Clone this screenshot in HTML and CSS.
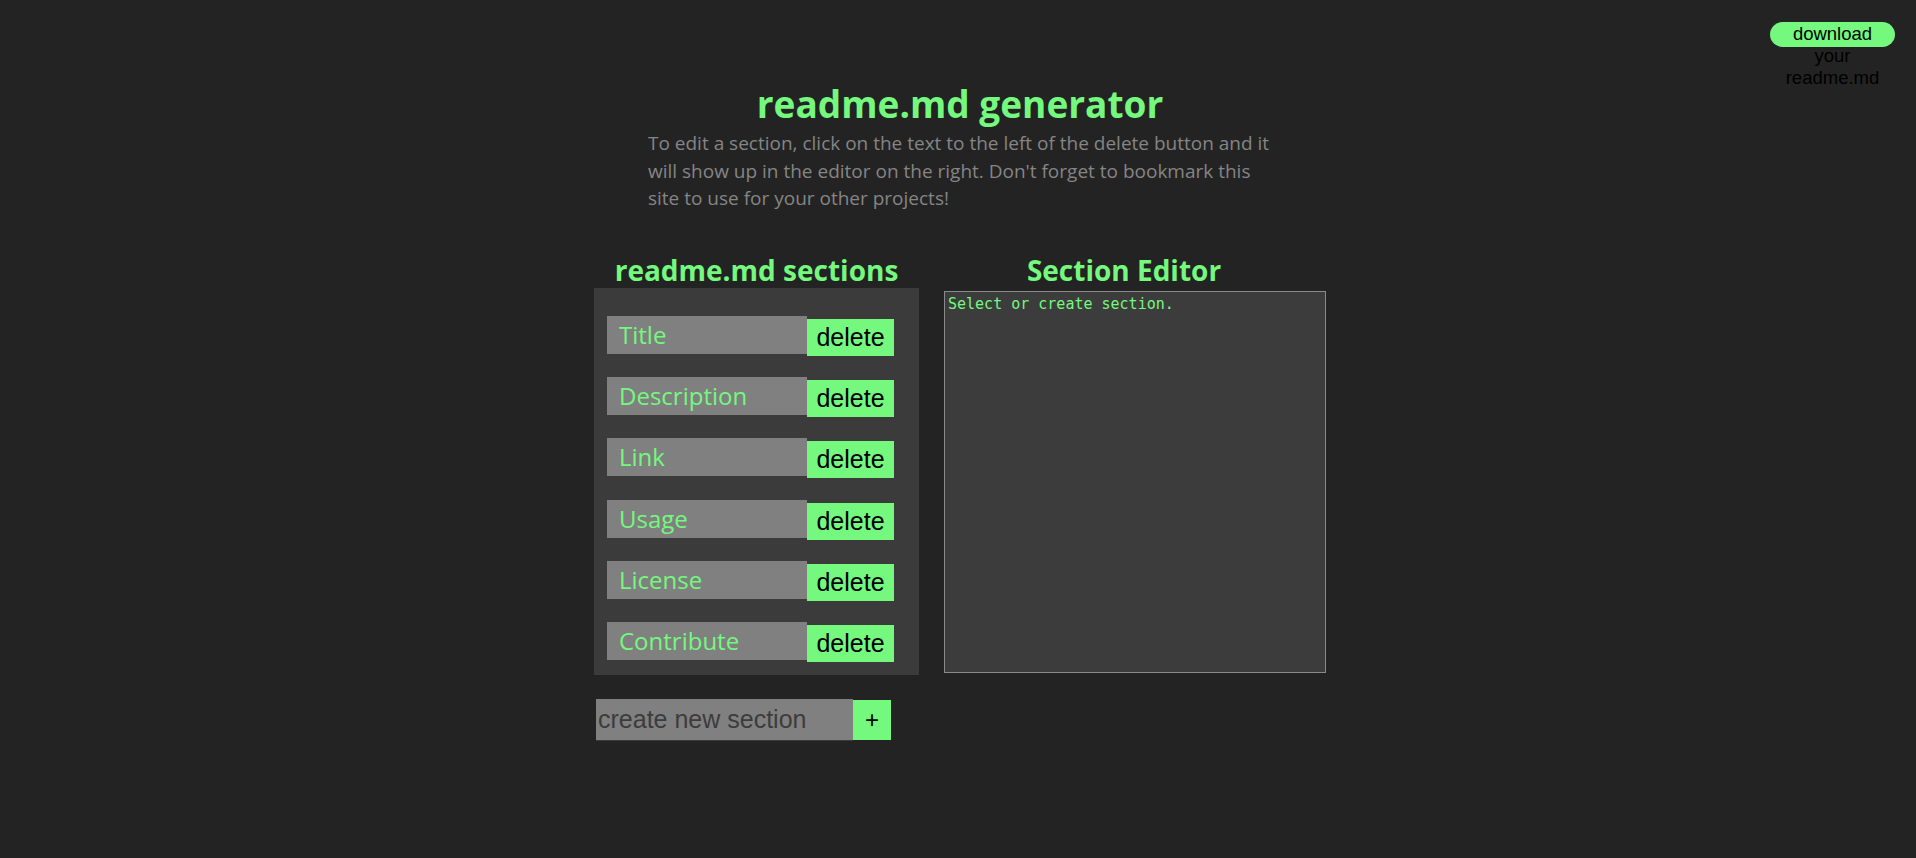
FILE: index.html
```html
<!DOCTYPE html>
<html lang="en">
<head>
<meta charset="utf-8">
<title>readme.md generator</title>
<link rel="stylesheet" href="styles.css">
</head>
<body>
<div class="download">download your readme.md</div>
<main class="app">
  <header class="intro">
    <h1 class="title">readme.md generator</h1>
    <p class="lead">To edit a section, click on the text to the left of the delete button and it will show up in the editor on the right. Don't forget to bookmark this site to use for your other projects!</p>
  </header>
  <div class="workspace">
    <section class="sections-col">
      <h2 class="col-title">readme.md sections</h2>
      <div class="panel">
        <div class="row"><div class="sec-name">Title</div><button class="del">delete</button></div>
        <div class="row"><div class="sec-name">Description</div><button class="del">delete</button></div>
        <div class="row"><div class="sec-name">Link</div><button class="del">delete</button></div>
        <div class="row"><div class="sec-name">Usage</div><button class="del">delete</button></div>
        <div class="row"><div class="sec-name">License</div><button class="del">delete</button></div>
        <div class="row"><div class="sec-name">Contribute</div><button class="del">delete</button></div>
      </div>
      <div class="new-row">
        <input class="new-input" type="text" placeholder="create new section">
        <button class="add">+</button>
      </div>
    </section>
    <section class="editor-col">
      <h2 class="col-title editor-title">Section Editor</h2>
      <textarea class="editor">Select or create section.</textarea>
    </section>
  </div>
</main>
</body>
</html>
```
FILE: styles.css
```css
html, body {
  margin: 0;
  padding: 0;
}
body {
  background: #232323;
  font-family: "Open Sans", "Noto Sans", sans-serif;
  min-height: 858px;
  position: relative;
}
.download {
  position: absolute;
  top: 22px;
  right: 21px;
  width: 125px;
  height: 25px;
  border-radius: 13px;
  background: #74f87e;
  color: #000;
  font-family: "Liberation Sans", Arial, sans-serif;
  font-size: 18.5px;
  line-height: 22px;
  text-align: center;
  padding: 1px 15px 0;
  box-sizing: border-box;
}
.app {
  width: 732px;
  margin-left: calc(50% - 364px);
  padding-top: 84px;
}
.intro {
  width: 732px;
}
.title {
  margin: 0;
  font-size: 37px;
  line-height: 40px;
  font-weight: 700;
  color: #74f87e;
  text-align: center;
}
.lead {
  margin: 6px 0 0 54px;
  width: 634px;
  font-size: 19px;
  line-height: 27.5px;
  color: #858585;
}
.workspace {
  display: flex;
  gap: 25px;
  margin-top: 40px;
  align-items: flex-start;
}
.sections-col {
  width: 325px;
}
.col-title {
  margin: 0;
  font-size: 28px;
  line-height: 34px;
  font-weight: 700;
  color: #74f87e;
  text-align: center;
}
.editor-title {
  padding-right: 22px;
}
.panel {
  margin-top: 1px;
  background: #3b3b3b;
  padding: 28px 13px 13px;
  display: flex;
  flex-direction: column;
  gap: 21.4px;
}
.row {
  display: flex;
  align-items: flex-start;
}
.sec-name {
  width: 200px;
  height: 38px;
  box-sizing: border-box;
  padding-left: 12px;
  background: #808080;
  color: #74f87e;
  font-size: 24px;
  line-height: 38px;
}
.del {
  margin-top: 3px;
  width: 87px;
  height: 37px;
  padding: 0;
  border: none;
  background: #74f87e;
  color: #000;
  font-family: "Liberation Sans", Arial, sans-serif;
  font-size: 25px;
  line-height: 37px;
  text-align: center;
}
.new-row {
  display: flex;
  align-items: flex-start;
  margin-top: 24px;
  margin-left: 2px;
}
.new-input {
  width: 257px;
  height: 42px;
  box-sizing: border-box;
  margin: 0;
  padding: 0 0 0 2px;
  border: none;
  border-bottom: 1px solid #3a3a3a;
  background: #808080;
  font-family: "Liberation Sans", Arial, sans-serif;
  font-size: 25px;
  color: #3a3a3a;
  outline: none;
}
.new-input::placeholder {
  color: #3c3c3c;
}
.add {
  margin-top: 1px;
  width: 38px;
  height: 40px;
  padding: 0;
  border: none;
  background: #74f87e;
  color: #000;
  font-family: "Liberation Sans", Arial, sans-serif;
  font-size: 24px;
  line-height: 40px;
}
.editor-col {
  width: 382px;
}
.editor {
  display: block;
  margin-top: 4px;
  width: 382px;
  height: 382px;
  box-sizing: border-box;
  padding: 3px 3px;
  border: 1px solid #8a8a8a;
  background: #3c3c3c;
  color: #74f87e;
  font-family: "DejaVu Sans Mono", "Liberation Mono", monospace;
  font-size: 15px;
  resize: none;
  outline: none;
}
```
